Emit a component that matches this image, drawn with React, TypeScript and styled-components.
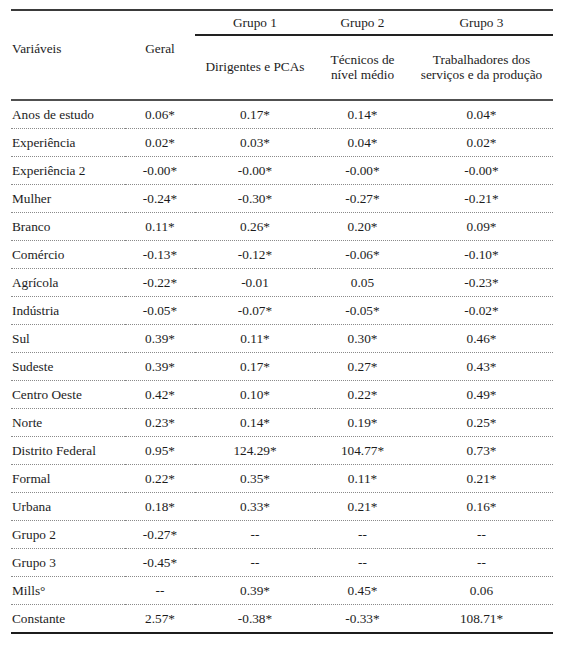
import React from "react";
import styled, { createGlobalStyle } from "styled-components";

const Global = createGlobalStyle`
  html, body { margin: 0; padding: 0; background: #ffffff; }
  body { font-family: "Liberation Serif", "Times New Roman", serif; }
`;

const Page = styled.div`
  padding: 9px 0 0 11px;
`;

const Table = styled.table`
  width: 542px;
  border-collapse: separate;
  border-spacing: 0;
  table-layout: fixed;
  font-family: "Liberation Serif", "Times New Roman", serif;
  font-size: 13.3px;
  color: #1c1c1c;
  border-top: 2px solid #3a3a3a;
`;

const Head = styled.th<{ $align?: "left" | "center" }>`
  font-weight: normal;
  text-align: ${(p) => p.$align ?? "center"};
  vertical-align: top;
  padding: 30px 0 0 ${(p) => (p.$align === "left" ? "1px" : "0")};
  border-bottom: 2px solid #505050;
  line-height: 15px;
`;

const GroupHead = styled.th`
  font-weight: normal;
  text-align: center;
  height: 25px;
  padding: 4px 0 0 0;
  box-sizing: border-box;
  vertical-align: top;
  border-bottom: 2px solid #222;
  line-height: 15px;
`;

const SubHead = styled.th`
  font-weight: normal;
  text-align: center;
  vertical-align: middle;
  height: 65px;
  padding: 0 0 2px 0;
  box-sizing: border-box;
  border-bottom: 2px solid #505050;
  line-height: 15px;
`;

const Cell = styled.td<{ $label?: boolean; $last?: boolean }>`
  height: ${(p) => (p.$last ? "29px" : "28px")};
  box-sizing: border-box;
  padding: 0 0 0 ${(p) => (p.$label ? "1px" : "0")};
  text-align: ${(p) => (p.$label ? "left" : "center")};
  vertical-align: middle;
  line-height: 15px;
  white-space: nowrap;
  border-bottom: ${(p) => (p.$last ? "2px solid #1c1c1c" : "1px dotted #8a8a8a")};
`;

const rows: [string, string, string, string, string][] = [
  ["Anos de estudo", "0.06*", "0.17*", "0.14*", "0.04*"],
  ["Experiência", "0.02*", "0.03*", "0.04*", "0.02*"],
  ["Experiência 2", "-0.00*", "-0.00*", "-0.00*", "-0.00*"],
  ["Mulher", "-0.24*", "-0.30*", "-0.27*", "-0.21*"],
  ["Branco", "0.11*", "0.26*", "0.20*", "0.09*"],
  ["Comércio", "-0.13*", "-0.12*", "-0.06*", "-0.10*"],
  ["Agrícola", "-0.22*", "-0.01", "0.05", "-0.23*"],
  ["Indústria", "-0.05*", "-0.07*", "-0.05*", "-0.02*"],
  ["Sul", "0.39*", "0.11*", "0.30*", "0.46*"],
  ["Sudeste", "0.39*", "0.17*", "0.27*", "0.43*"],
  ["Centro Oeste", "0.42*", "0.10*", "0.22*", "0.49*"],
  ["Norte", "0.23*", "0.14*", "0.19*", "0.25*"],
  ["Distrito Federal", "0.95*", "124.29*", "104.77*", "0.73*"],
  ["Formal", "0.22*", "0.35*", "0.11*", "0.21*"],
  ["Urbana", "0.18*", "0.33*", "0.21*", "0.16*"],
  ["Grupo 2", "-0.27*", "--", "--", "--"],
  ["Grupo 3", "-0.45*", "--", "--", "--"],
  ["Mills°", "--", "0.39*", "0.45*", "0.06"],
  ["Constante", "2.57*", "-0.38*", "-0.33*", "108.71*"],
];

export default function App() {
  return (
    <Page>
      <Global />
      <Table>
        <colgroup>
          <col style={{ width: 114 }} />
          <col style={{ width: 70 }} />
          <col style={{ width: 120 }} />
          <col style={{ width: 95 }} />
          <col style={{ width: 143 }} />
        </colgroup>
        <thead>
          <tr>
            <Head rowSpan={2} $align="left">Variáveis</Head>
            <Head rowSpan={2}>Geral</Head>
            <GroupHead>Grupo 1</GroupHead>
            <GroupHead>Grupo 2</GroupHead>
            <GroupHead>Grupo 3</GroupHead>
          </tr>
          <tr>
            <SubHead>Dirigentes e PCAs</SubHead>
            <SubHead>
              Técnicos de
              <br />
              nível médio
            </SubHead>
            <SubHead>
              Trabalhadores dos
              <br />
              serviços e da produção
            </SubHead>
          </tr>
        </thead>
        <tbody>
          {rows.map((r, i) => {
            const last = i === rows.length - 1;
            return (
              <tr key={r[0]}>
                <Cell $label $last={last}>{r[0]}</Cell>
                <Cell $last={last}>{r[1]}</Cell>
                <Cell $last={last}>{r[2]}</Cell>
                <Cell $last={last}>{r[3]}</Cell>
                <Cell $last={last}>{r[4]}</Cell>
              </tr>
            );
          })}
        </tbody>
      </Table>
    </Page>
  );
}
